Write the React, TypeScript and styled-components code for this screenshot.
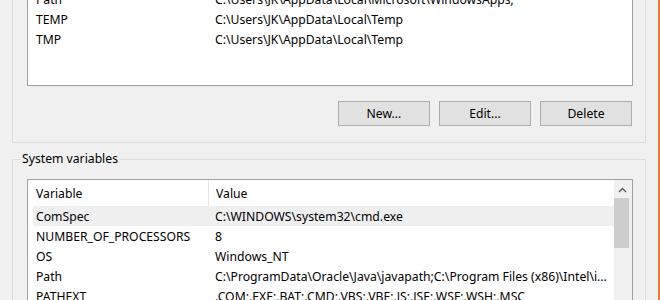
import React from "react";
import styled, { createGlobalStyle } from "styled-components";

const Global = createGlobalStyle`
  html, body { margin: 0; padding: 0; background: #f0f0f0; overflow: hidden; }
  * { box-sizing: border-box; }
`;

const S = {
  Window: styled.div`
    width: 660px;
    height: 300px;
    overflow: hidden;
    background: #f0f0f0;
    border-right: 2px solid #ed7a35;
    padding: 0 12px;
    font-family: "Noto Sans", "Open Sans", sans-serif;
    font-size: 12.2px;
    color: #000;
  `,
  Group: styled.div<{ $offset?: number }>`
    position: relative;
    border: 1px solid #dcdcdc;
    margin-top: ${({ $offset }) => $offset ?? 0}px;
    padding: 19px 12px 16px 14px;
  `,
  Legend: styled.span`
    position: absolute;
    top: -10px;
    left: 8px;
    padding: 0 1px;
    background: #f0f0f0;
    line-height: 18px;
  `,
  ListBox: styled.div<{ $height: number }>`
    display: flex;
    height: ${({ $height }) => $height}px;
    border: 1px solid #a0a0a0;
    background: #fff;
  `,
  Table: styled.div`
    flex: 1;
    min-width: 0;
  `,
  Header: styled.div`
    display: grid;
    grid-template-columns: 180px 1fr;
    height: 26px;
    align-items: center;
    .col {
      height: 100%;
      display: flex;
      align-items: center;
      padding-left: 8px;
      white-space: nowrap;
    }
    .col + .col {
      border-left: 1px solid #e5e5e5;
      padding-left: 7px;
    }
  `,
  Row: styled.div<{ $selected?: boolean }>`
    display: grid;
    grid-template-columns: 179px 1fr;
    height: 20px;
    align-items: center;
    margin-left: 5px;
    background: ${({ $selected }) => ($selected ? "#efefef" : "transparent")};
    span {
      padding-left: 3px;
      white-space: nowrap;
      overflow: hidden;
    }
  `,
  Scrollbar: styled.div`
    width: 18px;
    display: flex;
    flex-direction: column;
    align-items: flex-start;
    background: #f0f0f0;
    .arrow {
      width: 17px;
      height: 17px;
      display: flex;
      align-items: center;
      justify-content: center;
      margin-top: 1px;
    }
  `,
  Thumb: styled.div`
    width: 15px;
    height: 50px;
    background: #cdcdcd;
  `,
  Buttons: styled.div`
    display: flex;
    justify-content: flex-end;
    gap: 9px;
    margin-top: 15px;
    padding-right: 1px;
  `,
  Button: styled.button`
    width: 92px;
    height: 25px;
    border: 1px solid #adadad;
    background: #e1e1e1;
    font: inherit;
    color: #000;
    padding: 0;
  `,
  Spacer: styled.div`
    height: 16px;
  `,
};

const userVars = [
  ["OneDrive", "C:\\Users\\JK\\OneDrive"],
  ["Path", "C:\\Users\\JK\\AppData\\Local\\Microsoft\\WindowsApps;"],
  ["TEMP", "C:\\Users\\JK\\AppData\\Local\\Temp"],
  ["TMP", "C:\\Users\\JK\\AppData\\Local\\Temp"],
];

const systemVars = [
  ["ComSpec", "C:\\WINDOWS\\system32\\cmd.exe"],
  ["NUMBER_OF_PROCESSORS", "8"],
  ["OS", "Windows_NT"],
  ["Path", "C:\\ProgramData\\Oracle\\Java\\javapath;C:\\Program Files (x86)\\Intel\\i..."],
  ["PATHEXT", ".COM;.EXE;.BAT;.CMD;.VBS;.VBE;.JS;.JSE;.WSF;.WSH;.MSC"],
  ["PROCESSOR_ARCHITECTURE", "AMD64"],
];

function VarTable({ rows, selected }: { rows: string[][]; selected?: number }) {
  return (
    <S.Table>
      <S.Header>
        <div className="col">Variable</div>
        <div className="col">Value</div>
      </S.Header>
      {rows.map(([name, value], i) => (
        <S.Row key={name + i} $selected={i === selected}>
          <span>{name}</span>
          <span>{value}</span>
        </S.Row>
      ))}
    </S.Table>
  );
}

export default function App() {
  return (
    <S.Window>
      <Global />
      <S.Group $offset={-78}>
        <S.Legend>User variables for JK</S.Legend>
        <S.ListBox $height={144}>
          <VarTable rows={userVars} />
        </S.ListBox>
        <S.Buttons>
          <S.Button>New...</S.Button>
          <S.Button>Edit...</S.Button>
          <S.Button>Delete</S.Button>
        </S.Buttons>
      </S.Group>
      <S.Spacer />
      <S.Group>
        <S.Legend>System variables</S.Legend>
        <S.ListBox $height={200}>
          <VarTable rows={systemVars} selected={0} />
          <S.Scrollbar>
            <div className="arrow">
              <svg width="9" height="6" viewBox="0 0 9 6">
                <path d="M1 5 L4.5 1.5 L8 5" fill="none" stroke="#606060" strokeWidth="1.4" />
              </svg>
            </div>
            <S.Thumb />
          </S.Scrollbar>
        </S.ListBox>
      </S.Group>
    </S.Window>
  );
}
